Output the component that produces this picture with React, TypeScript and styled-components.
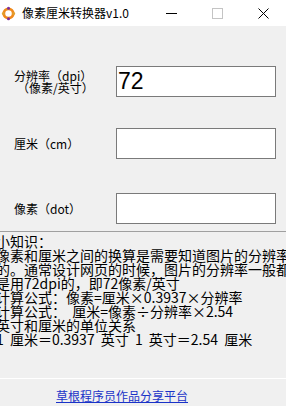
import React from "react";
import styled, { createGlobalStyle } from "styled-components";

const Global = createGlobalStyle`
  html, body { margin: 0; padding: 0; }
  body {
    width: 286px;
    height: 406px;
    overflow: hidden;
    background: #f0f0f0;
    font-family: "Noto Sans CJK SC", "Noto Sans", sans-serif;
  }
`;

const Window = styled.div`
  width: 286px;
  height: 406px;
  display: flex;
  flex-direction: column;
  background: #f0f0f0;
  overflow: hidden;
`;

const TitleBar = styled.div`
  height: 26px;
  flex: none;
  background: #ffffff;
  display: flex;
  align-items: center;
  padding-left: 1px;
`;

const AppIcon = styled.svg`
  width: 15px;
  height: 15px;
  margin-top: 1px;
`;

const Title = styled.span`
  margin-left: 6px;
  font-size: 12px;
  color: #000;
  flex: 1;
  line-height: 14px;
`;

const WinButtons = styled.div`
  display: flex;
  height: 100%;
`;

const WinButton = styled.div<{ $w: number }>`
  width: ${(p) => p.$w}px;
  height: 100%;
  display: flex;
  align-items: center;
  justify-content: center;
`;

const Form = styled.div`
  padding-top: 40px;
  display: flex;
  flex-direction: column;
`;

const Row = styled.div<{ $top: number }>`
  display: grid;
  grid-template-columns: 116px 160px;
  height: 31px;
  margin-top: ${(p) => p.$top}px;
  align-items: center;
`;

const Label = styled.div`
  padding-left: 14px;
  font-size: 12px;
  line-height: 12px;
  color: #000;
  white-space: nowrap;
`;

const LabelSub = styled.div`
  padding-left: 3px;
`;

const Field = styled.div`
  box-sizing: border-box;
  height: 31px;
  border: 1px solid #7a7a7a;
  background: #ffffff;
  font-family: "Liberation Sans", Arial, sans-serif;
  font-size: 23px;
  line-height: 29px;
  padding-left: 1px;
  color: #000;
`;

const Notes = styled.div`
  margin-top: 7px;
  height: 153px;
  border-top: 1px solid #a0a0a0;
  box-sizing: border-box;
  overflow: hidden;
  padding-top: 2px;
`;

const NoteLines = styled.div`
  margin-left: -4px;
  font-size: 14px;
  line-height: 14px;
  color: #000;
  white-space: pre;
  word-spacing: 3px;
`;

const Footer = styled.div`
  border-top: 1px solid #ffffff;
  padding-left: 56px;
  padding-top: 3px;
`;

const Link = styled.a`
  font-size: 12px;
  line-height: 15px;
  color: #1a33c8;
  text-decoration: underline;
  cursor: pointer;
`;

const notes = [
  "小知识：",
  "像素和厘米之间的换算是需要知道图片的分辨率",
  "的。通常设计网页的时候，图片的分辨率一般都",
  "是用72dpi的，即72像素/英寸",
  "计算公式：像素=厘米×0.3937×分辨率",
  "计算公式： 厘米=像素÷分辨率×2.54",
  "英寸和厘米的单位关系",
  "1 厘米＝0.3937 英寸 1 英寸＝2.54 厘米",
];

export default function App() {
  return (
    <>
      <Global />
      <Window>
        <TitleBar>
          <AppIcon viewBox="0 0 16 16">
            <circle cx="8" cy="8" r="5" fill="none" stroke="#f08a1c" strokeWidth="3" />
            <circle cx="8" cy="2.5" r="1.6" fill="#7a2ca0" />
            <circle cx="8" cy="13.5" r="1.6" fill="#7a2ca0" />
            <circle cx="2.5" cy="8" r="1.6" fill="#e0a030" />
            <circle cx="13.5" cy="8" r="1.6" fill="#e0a030" />
            <circle cx="8" cy="8" r="2.2" fill="#ffffff" />
          </AppIcon>
          <Title>像素厘米转换器v1.0</Title>
          <WinButtons>
            <WinButton $w={46}>
              <svg width="11" height="11" viewBox="0 0 11 11">
                <line x1="0" y1="5.5" x2="11" y2="5.5" stroke="#000" strokeWidth="1" />
              </svg>
            </WinButton>
            <WinButton $w={46}>
              <svg width="11" height="11" viewBox="0 0 11 11">
                <rect x="0.5" y="0.5" width="10" height="10" fill="none" stroke="#c4c4c4" strokeWidth="1" />
              </svg>
            </WinButton>
            <WinButton $w={46}>
              <svg width="11" height="11" viewBox="0 0 11 11">
                <path d="M0.5 0.5 L10.5 10.5 M10.5 0.5 L0.5 10.5" stroke="#000" strokeWidth="1" />
              </svg>
            </WinButton>
          </WinButtons>
        </TitleBar>
        <Form>
          <Row $top={0}>
            <Label>
              分辨率（dpi）
              <LabelSub>（像素/英寸）</LabelSub>
            </Label>
            <Field>72</Field>
          </Row>
          <Row $top={31}>
            <Label>厘米（cm）</Label>
            <Field />
          </Row>
          <Row $top={34}>
            <Label>像素（dot）</Label>
            <Field />
          </Row>
        </Form>
        <Notes>
          <NoteLines>
            {notes.map((n, i) => (
              <div key={i}>{n}</div>
            ))}
          </NoteLines>
        </Notes>
        <Footer>
          <Link>草根程序员作品分享平台</Link>
        </Footer>
      </Window>
    </>
  );
}
